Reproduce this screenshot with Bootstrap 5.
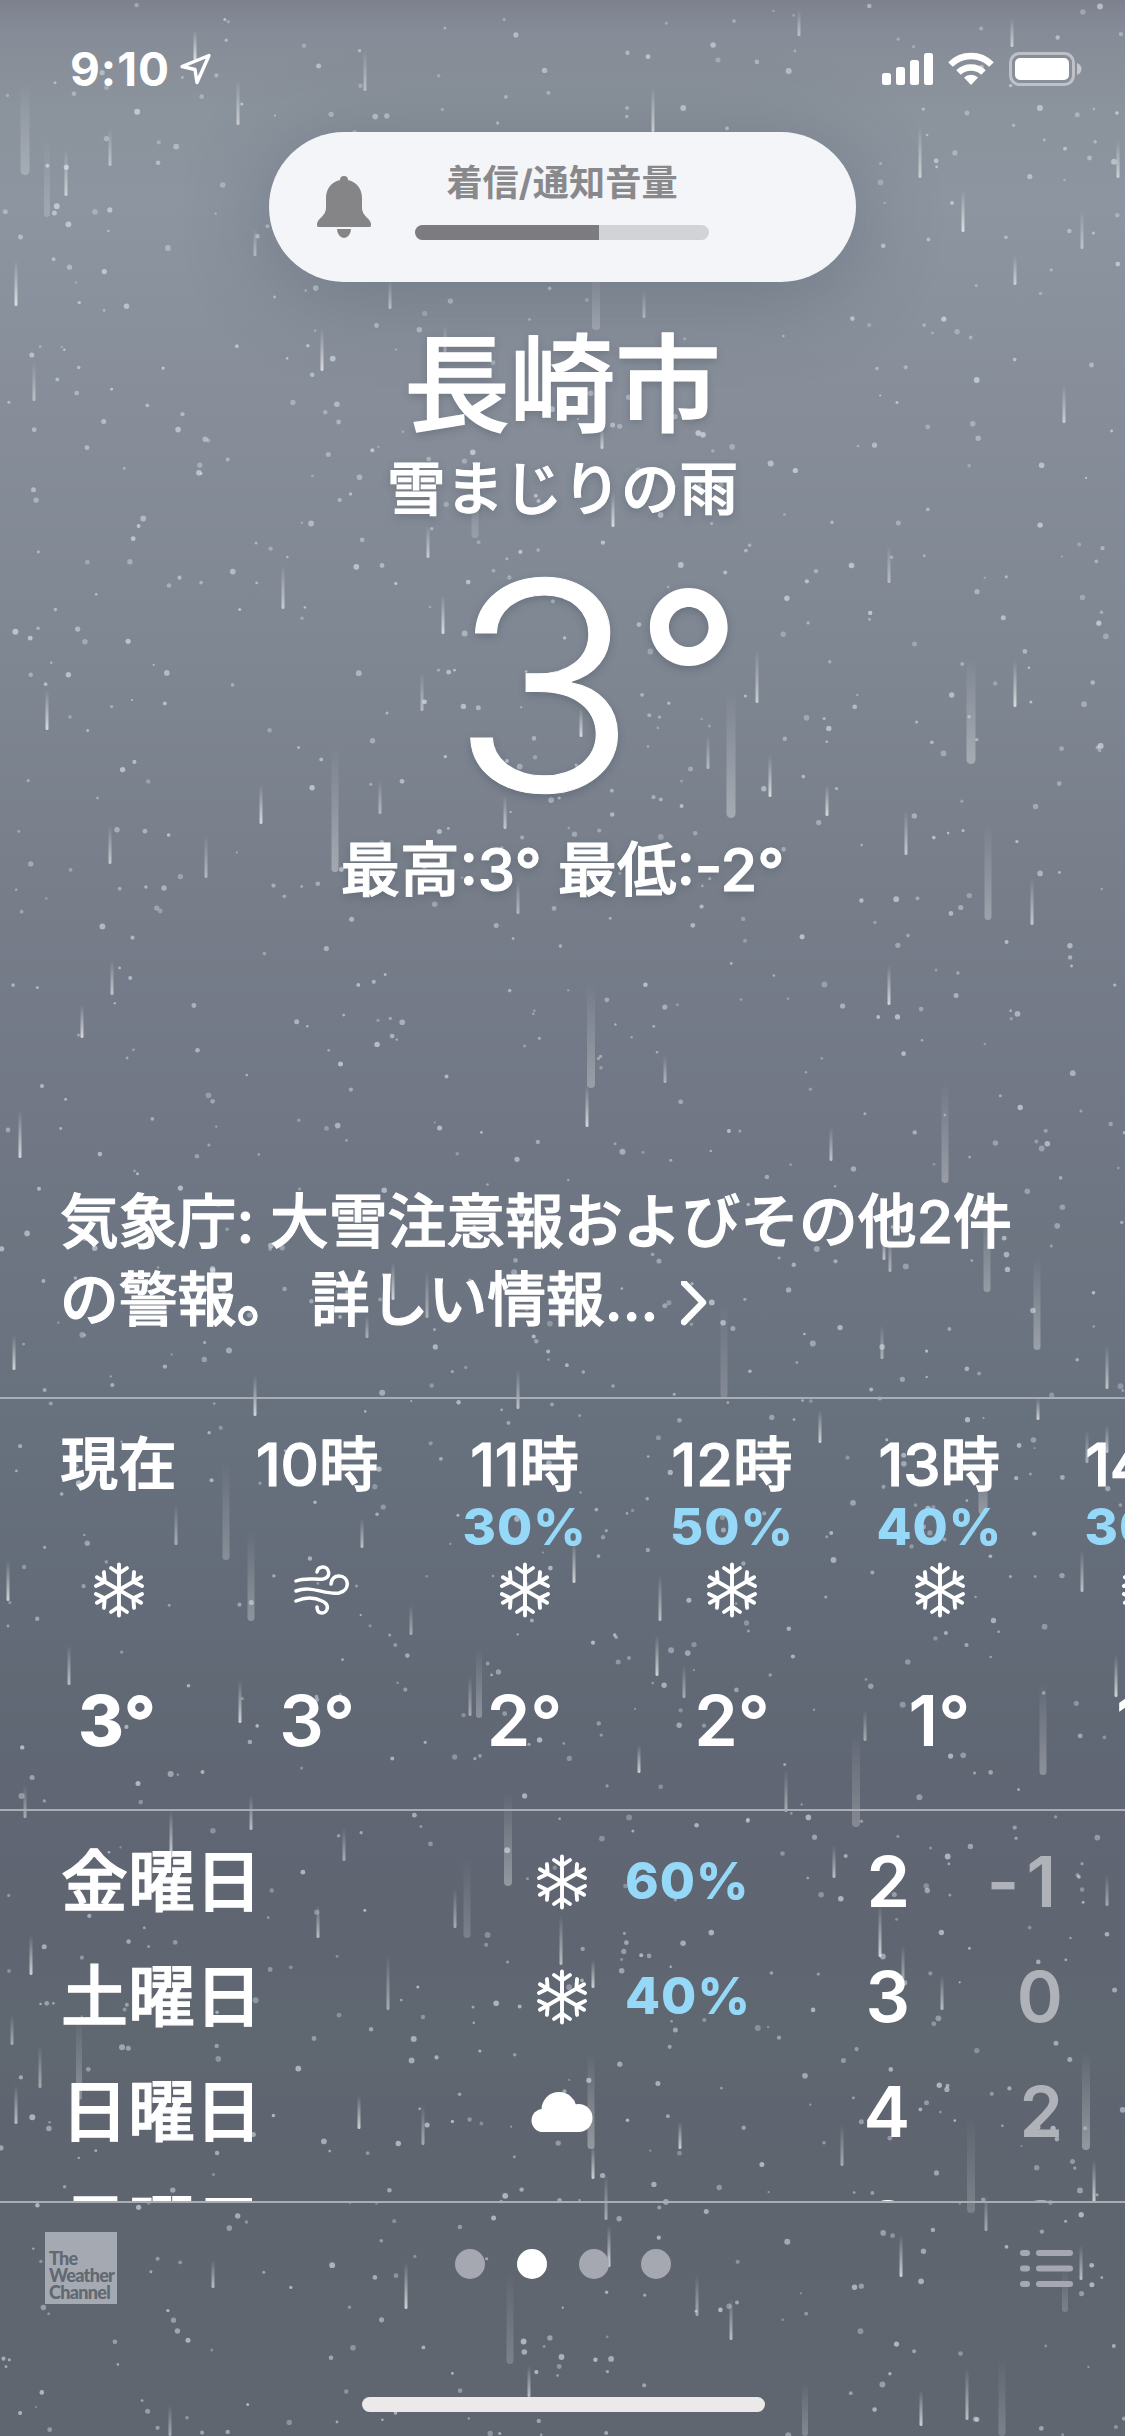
<!DOCTYPE html>
<html lang="ja">
<head>
<meta charset="utf-8">
<title>天気 - 長崎市</title>
<link href="https://cdn.jsdelivr.net/npm/bootstrap@5.3.0/dist/css/bootstrap.min.css" rel="stylesheet">
<script src="https://cdn.jsdelivr.net/npm/bootstrap@5.3.0/dist/js/bootstrap.bundle.min.js"></script>
<style>
html,body{margin:0;height:2436px;overflow:hidden}
body{font-family:Inter,"Noto Sans CJK JP",sans-serif;color:#fff;font-weight:600;
background:linear-gradient(180deg,#7c818d 0,#868c97 30px,#8b939c 110px,#8c95a0 200px,#878e99 400px,#7f8793 650px,#777e8a 900px,#717785 1130px,#6b7480 1300px,#68717e 1400px,#626b77 1620px,#606673 1800px,#5f6571 1920px,#5f6871 2040px,#5f6570 2110px,#5f666f 2436px)}
.screen{width:1125px;height:2436px}
.sky{inset:0;z-index:0}
.layer{z-index:1}
.statusbar{height:132px;padding:48px 43px 0 70px}
.clock{font-size:46px;line-height:42px;font-weight:700;letter-spacing:1px}
.hud{width:587px;height:150px;border-radius:75px;background:#f3f5f9;box-shadow:0 12px 90px rgba(50,60,75,.3);padding:0 147px 0 48px}
.hudbody{padding-bottom:12px}
.hudtext{font-size:36.2px;line-height:40px;color:#89898c;font-weight:700}
.hudbar{width:294px;height:15px;background:#d1d3d7;border-radius:8px;margin-top:22px}
.hudbar .progress-bar{background:#7c7c80}
.shadowed{text-shadow:0 3px 8px rgba(40,50,65,.28)}
.heavy{font-weight:500;-webkit-text-stroke:1.1px #fff}
.city{font-size:105.500px;line-height:120px;margin-top:43px;font-weight:500;-webkit-text-stroke:1.5px #fff}
.cond{font-size:58.5px;line-height:80px;margin-top:4px}
.bigtemp{font-size:290px;line-height:300px;font-weight:300;margin-top:7px;padding-left:68px}
.bigdigit{display:inline-block;transform:scaleX(1.065);transform-origin:8% 50%;-webkit-text-stroke:1px #fff}
.degree{font-size:232px;font-weight:500;line-height:1;vertical-align:33px;margin-left:9px}
.hilo{font-size:59.600px;line-height:70px;margin-top:-2px}
.alertline{font-size:58.8px;line-height:78px;padding:0 60px;height:214px;margin-top:279px;position:static}
.rule{height:2px;background:#a9aeb6}
.hours{height:410px;padding-left:23.500px}
.hour{width:207.4px}
.hour.now{width:190px}
.hour .t{font-size:59.500px;line-height:64px;margin-top:33px}
.hour .p{font-size:51px;line-height:50px;height:50px;font-weight:800;color:#96d8f8;letter-spacing:1px;margin-top:6px}
.hour .i{height:56px;margin-top:10px;padding-left:1px}
.hour .d{font-size:70px;line-height:80px;margin-top:63px;font-weight:600}
.hour.now .t{font-weight:700;font-size:58.500px;-webkit-text-stroke:0}
.hour.now .d{font-weight:800;padding-right:3px}
.days{height:390px;padding-top:13px;overflow:hidden}
.day{height:115px;padding-left:61px}
.wd{font-size:67px;width:470px;line-height:115px;-webkit-text-stroke-width:1.3px}
.wi{width:62px}
.pc{width:179px;padding-left:32px;font-size:51px;font-weight:800;color:#96d8f8;letter-spacing:1px}
.hi,.lo{font-size:70px;font-weight:600;line-height:115px}
.hi{width:138px}.lo{width:153px;color:#b0b2ba}
.lo.narrow{letter-spacing:7px}
.foot{height:232px;padding:29px 52px 0 45px}
.twc{width:72px;height:72px;background:#a5a9b1;color:#606872;font:900 18px/17px Lato,sans-serif;padding:18px 0 0 4px;letter-spacing:-.7px}
.dots{gap:32px;margin:17px 12px 0 0}
.listicon{margin-top:18px}
.dot{width:30px;height:30px;border-radius:50%;background:#a5a8b1}
.homebar{left:362px;top:2397px;width:403px;height:15px;border-radius:8px;background:#ebe9e9;z-index:2}
</style>
</head>
<body>
<svg width="0" height="0" class="position-absolute"><defs>
<g id="arm"><path d="M0 0V-25.500M-8 -22L0 -16.500L8 -22"/></g>
<g id="flake" fill="none" stroke="#fff" stroke-width="3.900" stroke-linecap="round" stroke-linejoin="round">
<use href="#arm"/><use href="#arm" transform="rotate(60)"/><use href="#arm" transform="rotate(120)"/><use href="#arm" transform="rotate(180)"/><use href="#arm" transform="rotate(240)"/><use href="#arm" transform="rotate(300)"/></g>
<linearGradient id="fall" x1="0" y1="0" x2="0" y2="1"><stop offset="0" stop-color="#fff" stop-opacity="0"/><stop offset="1" stop-color="#fff"/></linearGradient>
</defs></svg>
<div class="screen position-relative overflow-hidden">
<svg class="sky position-absolute" width="1125" height="2436"><defs><filter id="soft" filterUnits="userSpaceOnUse" x="0" y="0" width="1125" height="2436"><feGaussianBlur stdDeviation=".7"/></filter></defs><g id="sky" filter="url(#soft)"></g></svg>
<div class="layer position-relative">
 <header class="statusbar d-flex justify-content-between align-items-start">
  <div class="d-flex align-items-center"><span class="clock">9:10</span>
   <svg width="34" height="34" viewBox="0 0 34 34" class="ms-2"><path d="M31 3.500L4 14.500l13 3 2 13z" fill="none" stroke="#fff" stroke-width="3.400" stroke-linejoin="round"/></svg></div>
  <svg width="202" height="42" viewBox="880 48 202 42" fill="#fff"><rect x="882" y="73" width="9" height="12" rx="2.500"/><rect x="896" y="67" width="9" height="18" rx="2.500"/><rect x="910" y="60" width="9" height="25" rx="2.500"/><rect x="924" y="53" width="9" height="32" rx="2.500"/>
   <path d="M971 85l-7-7.500a10 10 0 0 1 14 0z"/><g fill="none" stroke="#fff" stroke-width="6.400"><path d="M958.500 72.500a18 18 0 0 1 25 0"/><path d="M950.500 64.500a29 29 0 0 1 41 0"/></g>
   <rect x="1010.500" y="53.500" width="63" height="31" rx="9" fill="none" stroke="#fff" stroke-opacity=".45" stroke-width="3"/><rect x="1015" y="58" width="54" height="22" rx="5"/><path d="M1077 63c6 2 6 10 0 12z" opacity=".5"/></svg>
 </header>
 <div class="hud mx-auto d-flex align-items-center justify-content-between">
  <svg width="54" height="62" viewBox="0 0 54 62" fill="#858588"><path d="M27 0c3 0 4 2 4 4 9 2 14 9 14 18v10c0 8 9 11 9 16v1.500q0 1.500-2 1.500H2q-2 0-2-1.500V48c0-5 9-8 9-16V22C9 13 14 6 23 4c0-2 1-4 4-4zM20 53h14a7 9 0 0 1-14 0z"/></svg>
  <div class="hudbody d-flex flex-column align-items-center"><div class="hudtext">着信/通知音量</div><div class="progress hudbar"><div class="progress-bar" style="width:62.6%"></div></div></div>
 </div>
 <main>
  <section class="text-center shadowed">
   <div class="city">長崎市</div><div class="cond heavy">雪まじりの雨</div><div class="bigtemp"><span class="bigdigit">3</span><span class="degree">°</span></div><div class="hilo heavy">最高:3° 最低:-2°</div>
  </section>
  <div class="alertline heavy text-nowrap">気象庁: 大雪注意報およびその他2件<br>の警報。 詳しい情報... <svg class="ms-2" width="30" height="48" viewBox="0 0 30 48"><path d="M3 2l19 19.500L3 41" fill="none" stroke="#fff" stroke-width="6.500" stroke-linecap="round" stroke-linejoin="round"/></svg></div>
  <div class="rule"></div>
  <section class="hours d-flex text-center" id="hours"></section>
  <div class="rule"></div>
  <section class="days" id="days"></section>
 </main>
 <div class="rule"></div>
 <footer class="foot d-flex justify-content-between align-items-start">
  <div class="twc">The<br>Weather<br>Channel</div>
  <div class="d-flex dots"><i class="dot"></i><i class="dot bg-white"></i><i class="dot"></i><i class="dot"></i></div>
  <svg class="listicon" width="53" height="38" fill="#a5a8b1"><g id="li"><rect width="10" height="6" rx="3"/><rect x="16" width="37" height="6" rx="3"/></g><use href="#li" y="15.500"/><use href="#li" y="31"/></svg>
 </footer>
</div>
<div class="homebar position-absolute"></div>
</div>
<script>
const flake='<svg width="56" height="56" viewBox="-28 -28 56 56"><use href="#flake"/></svg>';
const wind='<svg class="ms-2" width="56" height="50" viewBox="0 0 56 50" fill="none" stroke="#fff" stroke-width="3.500" stroke-linecap="round"><path d="M2 16c10-4 20-1 27-2 9-2 6-12 0-12q-5 0-6 5M2 26c16-6 28 4 43 2 12-3 10-17 0-17q-7 0-8 8M2 36c12-5 20-3 26 0 9 4 5 12 0 12q-5 0-5-6"/></svg>';
const cloud='<svg width="62" height="40" viewBox="0 0 62 40" fill="#fff"><circle cx="28" cy="17.500" r="17.500"/><circle cx="47.500" cy="26" r="14"/><circle cx="12" cy="28.500" r="11.500"/><rect x="12" y="20" width="36" height="20"/></svg>';
hours.innerHTML=[['現在','',flake,'3°'],['10時','',wind,'3°'],['11時','30%',flake,'2°'],['12時','50%',flake,'2°'],['13時','40%',flake,'1°'],['14時','30%',flake,'1°']].map((h,i)=>`<div class="hour flex-shrink-0 ${i?'':'now'}"><div class="t heavy">${h[0]}</div><div class="p">${h[1]}</div><div class="i d-flex justify-content-center align-items-center">${h[2]}</div><div class="d">${h[3]}</div></div>`).join('');
days.innerHTML=[['金曜日',flake,'60%','2','-1'],['土曜日',flake,'40%','3','0'],['日曜日',cloud,'','4','2'],['月曜日','','','8','3']].map(d=>`<div class="day d-flex align-items-center"><div class="wd heavy">${d[0]}</div><div class="wi d-flex justify-content-center">${d[1]}</div><div class="pc">${d[2]}</div><div class="hi text-end">${d[3]}</div><div class="lo text-end ${d[4]==='-1'?'narrow':''}">${d[4]}</div></div>`).join('');

/* falling rain: x, top, bottom, width of wide blurred drops */
const drops=[[799,10,36],[1012,18,47],[195,30,60],[365,50,91],[238,80,125],[653,88,132],[110,128,166],[66,150,196],[47,145,217,6],[25,90,175,9],[920,125,178],[963,190,232],[1082,210,249],[1118,140,178],[16,260,306],[255,228,256],[390,280,309],[596,270,330,8],[644,290,318],[1015,255,285],
[322,328,371],[445,325,352],[602,425,449],[613,492,527],[475,490,538,7],[428,525,558],[443,595,634],[422,672,711],[757,650,703],[581,708,737],[708,735,769],[731,700,818,9],[770,755,797],[380,780,814],[505,795,829],[335,755,872,7],[518,880,914],
[1064,385,423],[1015,660,707],[971,665,764,9],[906,810,855],[827,785,816],[988,830,920,7],[1032,878,925],[889,965,1005],[889,545,583],[591,990,1088,8],[587,1085,1127],[665,1055,1083],[112,960,995],[82,1005,1038],[206,835,878],[110,825,864],[261,785,824],[945,1090,1183,7],[831,1127,1161],[20,1110,1158],[34,362,401],[283,565,609],[47,690,730],
[890,1235,1272],[884,1235,1260],[987,1215,1292,7],[1037,1265,1350,7],[724,1310,1398,7],[14,1335,1370],[367,1315,1338],[518,1370,1409],[255,1375,1416],[882,1325,1359],[1107,1345,1389],[393,1262,1300],[427,1270,1318],
[226,1470,1560,7],[251,1540,1621,7],[176,1505,1545],[362,1518,1548],[8,1560,1601],[411,1605,1635],[69,1645,1685],[240,1680,1723],[470,1675,1716],[479,1655,1718,6],[574,1540,1583],[25,1785,1818],[251,1795,1830],
[820,1410,1443],[983,1470,1515,9],[660,1575,1621],[657,1635,1676],[684,1665,1698],[1082,1550,1592],[1116,1655,1697],[865,1710,1741],[1043,1690,1775,7],[639,1745,1773],[786,1770,1812],[856,1740,1827,8],[1038,1398,1420],[1087,1430,1463],[1107,1425,1453],
[171,1810,1858],[344,1828,1861],[508,1800,1886,8],[467,1865,1938,7],[455,1888,1928],[318,1905,1938],[31,1935,1975],[388,1955,2010],[561,1915,1965],[79,2025,2100,6],[40,2045,2088],[16,2085,2124],[359,2095,2129],[423,2105,2145],[591,2060,2149,7],[593,2145,2179],[12,2015,2045],
[834,1845,1878],[880,1905,1957],[903,1945,1980],[942,1975,2010],[680,2122,2149],[842,2125,2166],[971,2125,2213,8],[1094,2160,2202],[606,2175,2220],[1086,2060,2150,8],[593,1960,1988],[1107,1875,1906],
[213,2260,2288],[406,2262,2309],[510,2280,2364,7],[529,2365,2397],[609,2225,2267],[697,2275,2316],[731,2298,2340],[901,2235,2277],[986,2195,2231],[967,2368,2420],[1065,2275,2312,6],[170,2405,2436],[1081,2245,2280],[921,2390,2426],[1002,2365,2436,7],[805,2390,2436,6]];
let seed=9310;const rnd=()=>(seed=(seed*16807)%2147483647)/2147483647;
let art='';
for(let i=0;i<1350;i++){const r=1.1+rnd()*1.9;art+=`<circle cx="${(rnd()*1125).toFixed(1)}" cy="${(rnd()*2436).toFixed(1)}" r="${r.toFixed(1)}" fill="#e4edf4" fill-opacity="${(.3+rnd()*.3).toFixed(2)}"/>`}
drops.forEach(([x,a,b,w],i)=>{const k=w||3;art+=`<rect x="${x-k/2}" y="${w?a-8:a}" width="${k}" height="${b-a+(w?8:0)}" rx="${k/2}" fill="url(#fall)" opacity="${w?(.18+(i%4)*.05).toFixed(2):(.45+(i%3)*.12).toFixed(2)}"/>`});
sky.innerHTML=art;
</script>
</body>
</html>
